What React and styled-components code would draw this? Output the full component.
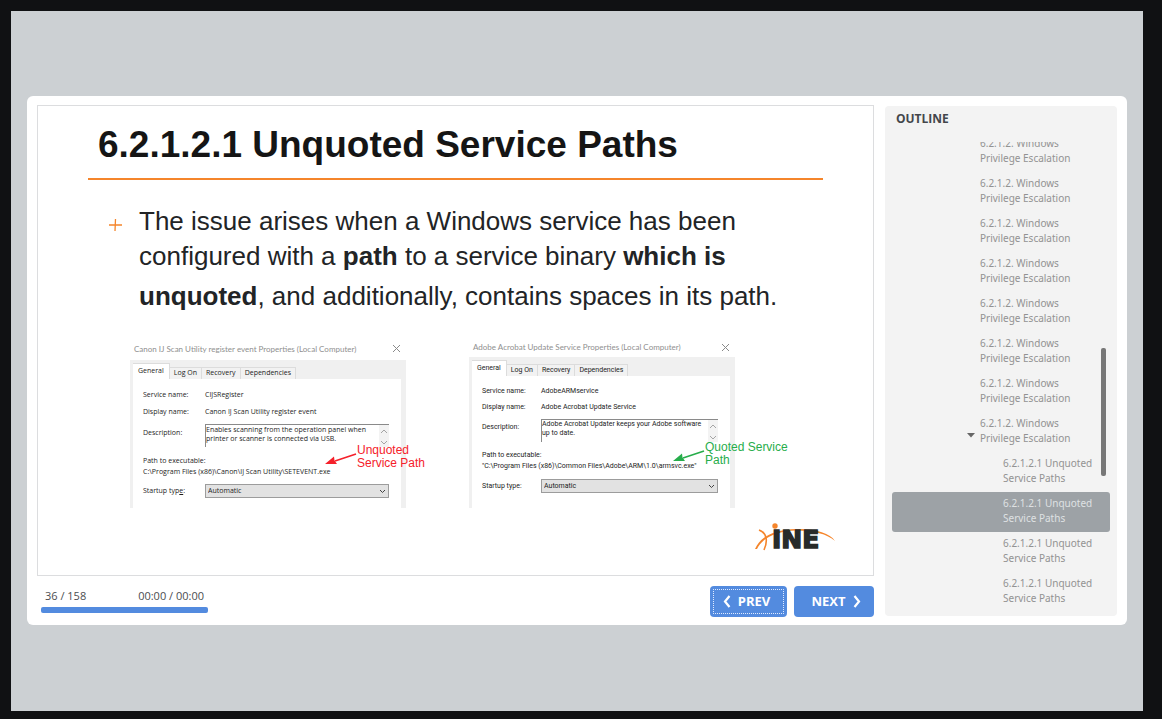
import React from "react";
import styled, { createGlobalStyle, css } from "styled-components";

const GlobalStyle = createGlobalStyle`
  * { box-sizing: border-box; }
  html, body, #root { height: 100%; }
  body {
    margin: 0;
    background: #101113;
    font-family: "Open Sans", "Noto Sans", sans-serif;
  }
  button, select, textarea { font: inherit; margin: 0; }
`;

const Page = styled.div`
  min-height: 100%;
  padding: 11px 19px 8px 11px;
  display: flex;
`;

const Stage = styled.main`
  flex: 1;
  min-width: 0;
  padding: 0 16px 2px;
  display: flex;
  align-items: center;
  background: #ccd0d3;
`;

const Player = styled.div`
  flex: 1;
  min-width: 0;
  display: grid;
  grid-template-columns: minmax(0, 1fr) 232px;
  column-gap: 11px;
  padding: 9px 10px 8px;
  background: #fff;
  border-radius: 6px;
`;

const Column = styled.div`
  display: flex;
  flex-direction: column;
  gap: 10px;
`;

const Slide = styled.article`
  position: relative;
  padding: 17px 50px 67px;
  border: 1px solid #dcdddf;
  font-family: "Liberation Sans", Arial, sans-serif;
  color: #222426;
`;

const Title = styled.h1`
  margin: 0;
  padding: 0 10px 11px;
  border-bottom: 2px solid #f5852b;
  font-size: 37px;
  line-height: 44px;
  font-weight: 700;
  color: #151515;
`;

const Point = styled.div`
  display: flex;
  margin-top: 24px;
  padding-left: 20px;
  gap: 16px;
`;

const Plus = styled.svg`
  flex: none;
  margin-top: 14px;
`;

const PointText = styled.p`
  margin: 0;
  font-size: 26px;
  line-height: 35px;
  white-space: nowrap;
`;

const LastLine = styled.span`
  display: block;
  margin-top: 5px;
`;

const Figures = styled.div`
  display: flex;
  gap: 63px;
  margin-top: 26px;
  padding-left: 42px;
`;

const Dialog = styled.section`
  position: relative;
  flex: 0 0 ${(p) => (p.$compact ? 266 : 276)}px;
  font-family: ${(p) => (p.$compact ? "Roboto" : '"Open Sans"')}, sans-serif;
  font-size: 7px;
  color: #1d1d1d;
`;

const DialogBar = styled.header`
  display: flex;
  align-items: center;
  justify-content: space-between;
  height: ${(p) => (p.$compact ? 17 : 20)}px;
  padding: 0 5px 2px 4px;
  font-family: Lato, sans-serif;
  font-size: 8px;
  color: #8f8f8f;
`;

const DialogFrame = styled.div`
  padding: 3px 5px 0 3px;
  background: #f0f0f0;
`;

const Tabs = styled.div`
  display: flex;
  align-items: flex-end;
  height: 16px;
`;

const Tab = styled.button`
  height: ${(p) => (p.$on ? 16 : 12)}px;
  padding: 0 4px;
  border: 1px solid #dcdcdc;
  border-width: 1px 1px 0 0;
  background: ${(p) => (p.$on ? "#fff" : "#f2f2f2")};
  color: inherit;
  line-height: 10px;
  ${(p) => p.$on && css`padding: 0 5px;`}
`;

const Panel = styled.div`
  height: ${(p) => (p.$compact ? 132 : 129)}px;
  padding: 7px 12px 0 10px;
  background: #fff;
`;

const Field = styled.div`
  display: flex;
  align-items: center;
  height: ${(p) => (p.$compact ? 16 : 17)}px;
`;

const Label = styled.label`
  flex: none;
  width: ${(p) => (p.$compact ? 59 : 62)}px;
`;

const AreaField = styled.div`
  position: relative;
  display: flex;
  margin-top: 4px;
  line-height: 17px;
`;

const Area = styled.textarea`
  flex: 1;
  min-width: 0;
  height: 23px;
  padding: 0 10px 0 0;
  border: 1px solid #8a8a8a;
  border-width: 1px 0 0 1px;
  border-radius: 0;
  background: #fff;
  color: inherit;
  font-size: 7px;
  line-height: 9px;
  resize: none;
  overflow: hidden;
`;

const AreaScroll = styled.svg`
  position: absolute;
  right: 0;
  top: 1px;
`;

const PathBlock = styled.div`
  margin-top: 8px;
  line-height: 11px;
  white-space: nowrap;
`;

const SelectField = styled.div`
  position: relative;
  display: flex;
  align-items: center;
  margin-top: 7px;
`;

const Select = styled.select`
  flex: 1;
  min-width: 0;
  height: 14px;
  padding: 0 2px;
  appearance: none;
  border: 1px solid #9c9c9c;
  border-radius: 0;
  background: #e2e2e2;
  color: inherit;
  font-size: 7px;
`;

const SelectArrow = styled.svg`
  position: absolute;
  right: 3px;
  top: 5px;
  pointer-events: none;
`;

const Note = styled.div`
  position: absolute;
  left: ${(p) => (p.$compact ? 236 : 227)}px;
  top: ${(p) => (p.$compact ? 101 : 104)}px;
  font-family: "Liberation Sans", Arial, sans-serif;
  font-size: 12px;
  line-height: 13px;
  white-space: pre;
  color: ${(p) => p.$color};
`;

const NoteArrow = styled.svg`
  position: absolute;
  right: 100%;
  top: 2px;
`;

const Logo = styled.svg`
  position: absolute;
  right: 36px;
  bottom: 22px;
`;

const Footer = styled.footer`
  display: flex;
  align-items: flex-start;
  justify-content: space-between;
  padding-left: 4px;
`;

const Progress = styled.div`
  width: 167px;
  font-size: 11px;
  line-height: 20px;
  color: #4b4d50;
`;

const Counters = styled.div`
  display: flex;
  justify-content: space-between;
  padding: 0 4px;
`;

const Track = styled.div`
  height: 6px;
  margin-top: 1px;
  border-radius: 2px;
  background: #538bdf;
`;

const Nav = styled.nav`
  display: flex;
  gap: 7px;
`;

const NavButton = styled.button`
  display: flex;
  align-items: center;
  justify-content: center;
  gap: 7px;
  width: ${(p) => (p.$focused ? 77 : 80)}px;
  height: 31px;
  padding: 0 4px 0 0;
  border: 0;
  border-radius: 4px;
  background: #538bdf;
  color: #fff;
  font-size: 13px;
  line-height: 31px;
  font-weight: 700;
  ${(p) => p.$focused && css`
    outline: 1px dotted #dfeaff;
    outline-offset: -4px;
  `}
  ${(p) => !p.$focused && css`padding: 0 0 0 4px;`}
`;

const Chevron = styled.svg`
  flex: none;
`;

const Sidebar = styled.aside`
  position: relative;
  display: flex;
  flex-direction: column;
  margin: 1px 0;
  padding: 0 7px 4px;
  border-radius: 4px;
  background: #f3f3f3;
`;

const SidebarTitle = styled.h2`
  flex: none;
  height: 36px;
  margin: 0;
  padding: 3px 4px 0;
  font-size: 12px;
  line-height: 20px;
  font-weight: 700;
  color: #43464b;
`;

const List = styled.div`
  flex: 1 1 0;
  min-height: 0;
  display: flex;
  flex-direction: column;
  justify-content: flex-end;
  overflow: hidden;
`;

const Item = styled.a`
  flex: none;
  position: relative;
  padding: 4px 13px 6px ${(p) => (p.$deep ? 111 : 88)}px;
  border-radius: 3px;
  font-family: "Noto Sans", "Open Sans", sans-serif;
  font-size: 10px;
  line-height: 15px;
  text-decoration: none;
  color: ${(p) => (p.$current ? "#dfe1e3" : "#929292")};
  background: ${(p) => (p.$current ? "#9da2a6" : "transparent")};
`;

const Caret = styled.svg`
  position: absolute;
  left: 75px;
  top: 21px;
`;

const Thumb = styled.div`
  position: absolute;
  right: 11px;
  top: 242px;
  width: 5px;
  height: 128px;
  border-radius: 2px;
  background: #777;
`;

function ServiceDialog({ id, compact, title, name, display, description, path, note, color, hotkey }) {
  return (
    <Dialog $compact={compact}>
      <DialogBar $compact={compact}>
        <span>{title}</span>
        <svg width="9" height="9" viewBox="0 0 9 9" aria-hidden="true">
          <path d="M1 1l7 7M8 1L1 8" stroke="#8a8a8a" fill="none" />
        </svg>
      </DialogBar>
      <DialogFrame>
        <Tabs>
          <Tab $on>General</Tab>
          <Tab>Log On</Tab>
          <Tab>Recovery</Tab>
          <Tab>Dependencies</Tab>
        </Tabs>
        <Panel $compact={compact}>
          <Field $compact={compact}>
            <Label as="span" $compact={compact}>Service name:</Label>
            <span>{name}</span>
          </Field>
          <Field $compact={compact}>
            <Label as="span" $compact={compact}>Display name:</Label>
            <span>{display}</span>
          </Field>
          <AreaField>
            <Label $compact={compact} htmlFor={`${id}-description`}>Description:</Label>
            <Area id={`${id}-description`} readOnly defaultValue={description} />
            <AreaScroll width="12" height="22" viewBox="0 0 12 22" aria-hidden="true">
              <path d="M2 0h10v22H2z" fill="#f3f3f3" />
              <path d="M4 8l3-3 3 3M4 16l3 3 3-3" stroke="#a5a5a5" fill="none" />
            </AreaScroll>
          </AreaField>
          <PathBlock>
            <div>Path to executable:</div>
            <div>{path}</div>
          </PathBlock>
          <SelectField>
            <Label $compact={compact} htmlFor={`${id}-startup`}>
              Startup typ{hotkey ? <u>e</u> : "e"}:
            </Label>
            <Select id={`${id}-startup`} defaultValue="Automatic">
              <option>Automatic</option>
            </Select>
            <SelectArrow width="7" height="5" viewBox="0 0 7 5" aria-hidden="true">
              <path d="M1 1l2.5 2.5L6 1" stroke="#444" fill="none" />
            </SelectArrow>
          </SelectField>
        </Panel>
      </DialogFrame>
      <Note $compact={compact} $color={color}>
        <NoteArrow width="36" height="22" viewBox="0 0 36 22" aria-hidden="true">
          <path d="M35 8L14 15" stroke={color} strokeWidth="1.6" fill="none" />
          <path d="M4 18L13 10.5L13.5 14.500L16 18Z" fill={color} />
        </NoteArrow>
        {note}
      </Note>
    </Dialog>
  );
}

const chapters = Array.from({ length: 8 }, (_, i) => ({
  text: "6.2.1.2. Windows Privilege Escalation",
  open: i === 7,
}));
const pages = Array.from({ length: 4 }, (_, i) => ({
  text: "6.2.1.2.1 Unquoted Service Paths",
  deep: true,
  current: i === 1,
}));

export default function App() {
  return (
    <Page>
      <GlobalStyle />
      <Stage>
        <Player>
          <Column>
            <Slide>
              <Title>6.2.1.2.1 Unquoted Service Paths</Title>
              <Point>
                <Plus width="15" height="15" viewBox="0 0 15 15" aria-hidden="true">
                  <path d="M1 7h13M7.500 1L7 13" stroke="#f5852b" strokeWidth="1.300" fill="none" />
                </Plus>
                <PointText>
                  The issue arises when a Windows service has been
                  <br />
                  configured with a <b>path</b> to a service binary <b>which is</b>
                  <LastLine>
                    <b>unquoted</b>, and additionally, contains spaces in its path.
                  </LastLine>
                </PointText>
              </Point>
              <Figures>
                <ServiceDialog
                  id="canon"
                  title="Canon IJ Scan Utility register event Properties (Local Computer)"
                  name="CIJSRegister"
                  display="Canon IJ Scan Utility register event"
                  description={"Enables scanning from the operation panel when\nprinter or scanner is connected via USB."}
                  path="C:\Program Files (x86)\Canon\IJ Scan Utility\SETEVENT.exe"
                  note={"Unquoted\nService Path"}
                  color="#f5202a"
                  hotkey
                />
                <ServiceDialog
                  id="adobe"
                  compact
                  title="Adobe Acrobat Update Service Properties (Local Computer)"
                  name="AdobeARMservice"
                  display="Adobe Acrobat Update Service"
                  description={"Adobe Acrobat Updater keeps your Adobe software\nup to date."}
                  path={'"C:\\Program Files (x86)\\Common Files\\Adobe\\ARM\\1.0\\armsvc.exe"'}
                  note={"Quoted Service\nPath"}
                  color="#27ad4b"
                />
              </Figures>
              <Logo width="84" height="32" viewBox="0 0 84 32" role="img" aria-label="INE">
                <path d="M2 28C8 14 23 9 43 8C62 7.500 77 12 82 20C74 13 61 9.500 43 9.500C27 10 10 15 4 28Z" fill="#f5852b" />
                <path d="M6 9C14 12 15 20 11 29" stroke="#f5852b" strokeWidth="1.600" fill="none" />
                <text x="19" y="27" fontFamily="DejaVu Sans" fontWeight="700" fontSize="25" fill="#282b2a" stroke="#282b2a" strokeWidth="1.400">INE</text>
                <circle cx="22" cy="5" r="2.700" fill="#f5852b" />
              </Logo>
            </Slide>
            <Footer>
              <Progress>
                <Counters>
                  <span>36 / 158</span>
                  <span>00:00 / 00:00</span>
                </Counters>
                <Track />
              </Progress>
              <Nav>
                <NavButton $focused>
                  <Chevron width="8" height="13" viewBox="0 0 8 13" aria-hidden="true">
                    <path d="M6.500 1L2 6.500L6.500 12" stroke="#fff" strokeWidth="2.200" fill="none" />
                  </Chevron>
                  PREV
                </NavButton>
                <NavButton>
                  NEXT
                  <Chevron width="8" height="13" viewBox="0 0 8 13" aria-hidden="true">
                    <path d="M1.500 1L6 6.500L1.500 12" stroke="#fff" strokeWidth="2.200" fill="none" />
                  </Chevron>
                </NavButton>
              </Nav>
            </Footer>
          </Column>
          <Sidebar>
            <SidebarTitle>OUTLINE</SidebarTitle>
            <List>
              {[...chapters, ...pages].map((item, i) => (
                <Item key={i} href="#" $deep={item.deep} $current={item.current}>
                  {item.open && (
                    <Caret width="8" height="5" viewBox="0 0 8 5" aria-hidden="true">
                      <path d="M0 0h8L4 4.500z" fill="#666" />
                    </Caret>
                  )}
                  {item.text}
                </Item>
              ))}
            </List>
            <Thumb />
          </Sidebar>
        </Player>
      </Stage>
    </Page>
  );
}
